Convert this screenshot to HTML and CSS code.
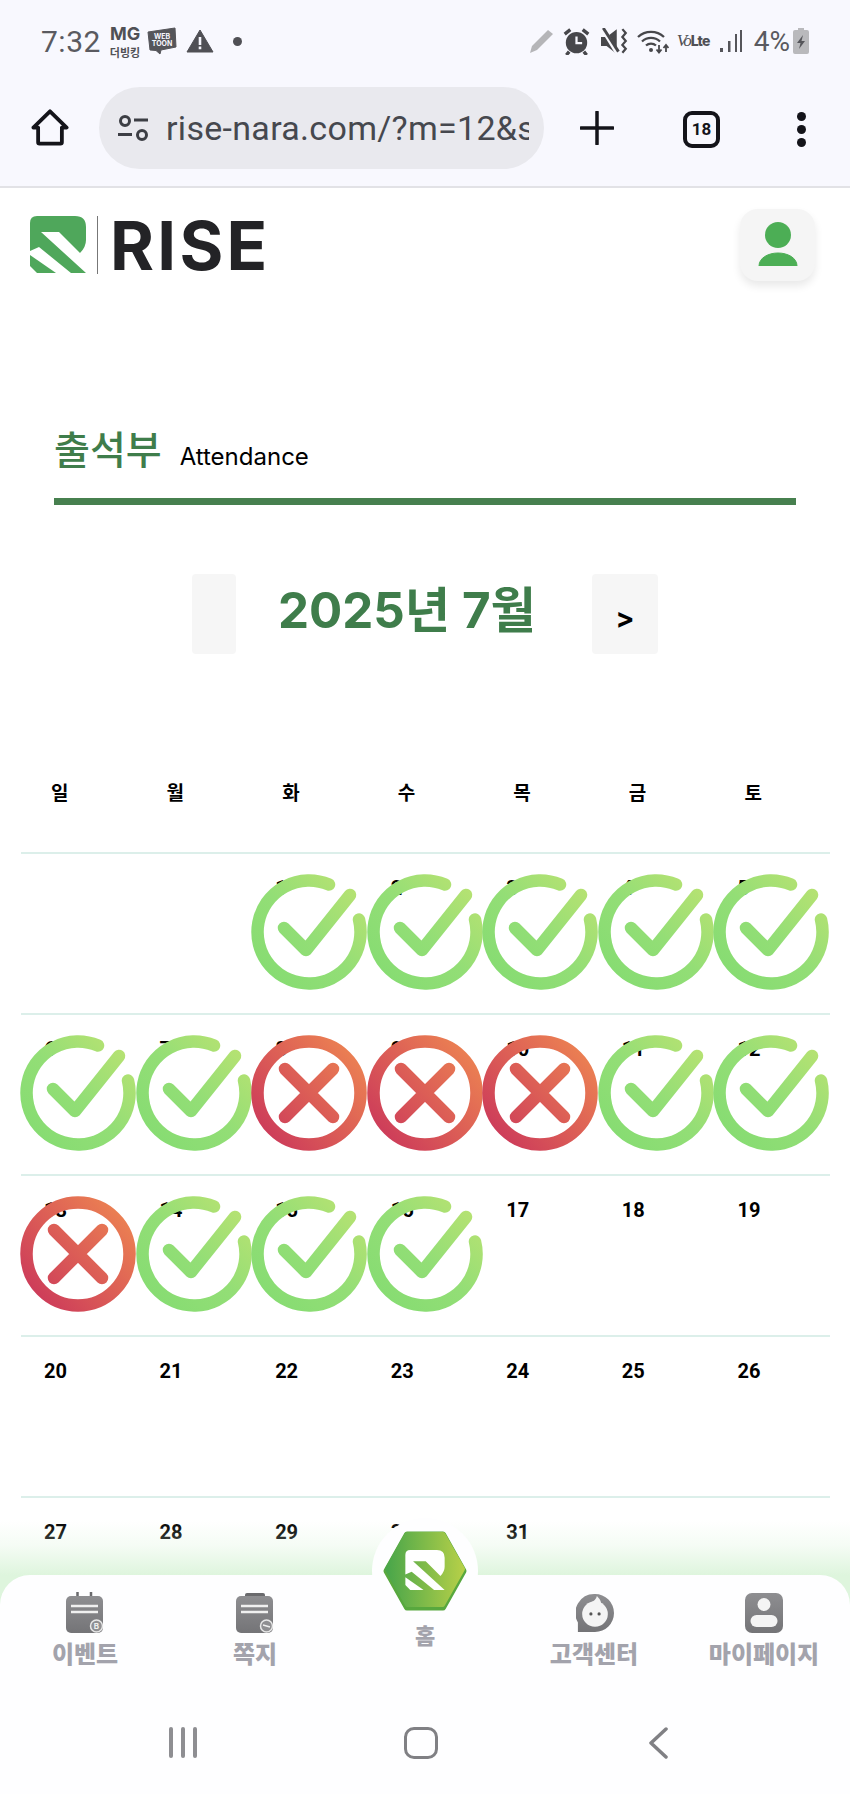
FILE: index.html
```html
<!DOCTYPE html>
<html lang="ko">
<head>
<meta charset="utf-8">
<title>출석부</title>
<link rel="stylesheet" href="styles.css">
</head>
<body>
<svg class="defs" width="0" height="0" aria-hidden="true">
  <defs>
    <linearGradient id="gOk" gradientUnits="userSpaceOnUse" x1="-45" y1="45" x2="45" y2="-45">
      <stop offset="0" stop-color="#86dc72"/><stop offset="0.5" stop-color="#93de76"/><stop offset="1" stop-color="#b6e272"/>
    </linearGradient>
    <linearGradient id="gNo" gradientUnits="userSpaceOnUse" x1="-45" y1="45" x2="50" y2="-40">
      <stop offset="0" stop-color="#cc3a5a"/><stop offset="1" stop-color="#ec8252"/>
    </linearGradient>
    <linearGradient id="gHex" x1="0" y1="0" x2="1" y2="0">
      <stop offset="0" stop-color="#4aa64a"/><stop offset="1" stop-color="#b4cf48"/>
    </linearGradient>
    <linearGradient id="gNav" x1="0" y1="0" x2="0" y2="1">
      <stop offset="0" stop-color="#8e8e91"/><stop offset="1" stop-color="#747477"/>
    </linearGradient>
    <symbol id="ok" viewBox="-58 -58 116 116">
      <g fill="none" stroke="url(#gOk)" stroke-width="12.500" stroke-linecap="round" stroke-linejoin="round">
        <path d="M20 -47.500A51.500 51.500 0 1 0 50 -12.500"/>
        <path d="M-25 -4L-3 18L41 -37"/>
      </g>
    </symbol>
    <symbol id="no" viewBox="-58 -58 116 116">
      <g fill="none" stroke="url(#gNo)" stroke-width="12.500" stroke-linecap="round">
        <circle r="51.500"/>
        <path d="M-24 -24L24 24M24 -24L-24 24"/>
      </g>
    </symbol>
    <symbol id="rmark" viewBox="0 0 56 57">
      <path d="M7 0H45Q56 0 56 11V24Q56 31 50 37L29 16H11L56 57H41L9 31L0 35V7Q0 0 7 0Z"/>
      <path d="M0 39V50L7 57H26Z"/>
    </symbol>
  </defs>
</svg>

<header class="statusbar">
  <div class="status-left">
    <span class="clock">7:32</span>
    <span class="mg"><b>MG</b><i>더빙킹</i></span>
    <svg class="ic-webtoon" viewBox="0 0 30 28"><path d="M1 5L28 1L29 20L14 23L13 27L9 23.500L3 23Z" fill="#55555a" stroke="#55555a" stroke-linejoin="round"/><text x="15" y="12" class="wt">WEB</text><text x="15" y="19" class="wt">TOON</text></svg>
    <svg class="ic-warn" viewBox="0 0 28 24"><path d="M14 1L27 23H1Z" fill="#505055" stroke="#505055" stroke-linejoin="round"/><path d="M12.700 8h2.600v8h-2.600zM12.700 17.600h2.600v2.600h-2.600z" fill="#f8f8fe"/></svg>
    <span class="dot"></span>
  </div>
  <div class="status-right">
    <svg class="ic-pen" viewBox="0 0 26 26"><path d="M1 25L3 18L19 2L24 6L8 22Z" fill="#b5b5b8"/></svg>
    <svg class="ic-alarm" viewBox="0 0 24 24"><circle cx="12" cy="13" r="9.500" fill="#47474b"/><path d="M1.500 5.500L6.500 1.500M22.500 5.500L17.500 1.500M5.500 21L3 24M18.500 21L21 24" stroke="#47474b" stroke-width="3"/><path d="M12 7.500v6h5" fill="none" stroke="#f8f8fe" stroke-width="2"/></svg>
    <svg class="ic-mute" viewBox="0 0 24 24"><path d="M0 8h5L14 1V23L5 16H0Z" fill="#47474b"/><path d="M1 0L15 23" stroke="#f8f8fe" stroke-width="4"/><path d="M2 0L15.500 21" stroke="#47474b" stroke-width="2.600"/><path d="M19 1l3 3.500-3 3.500 3 3.500-3 3.500 3 3.500-3 3.500" fill="none" stroke="#47474b" stroke-width="2"/></svg>
    <svg class="ic-wifi" viewBox="0 0 32 26"><path d="M1 9A19 19 0 0 1 27 9M5 13.500A13 13 0 0 1 23 13.500M9 17.500A7.500 7.500 0 0 1 19 17.500" fill="none" stroke="#47474b" stroke-width="2.300"/><circle cx="14" cy="22" r="2" fill="#47474b"/><path d="M22 17v7M19.500 21.500l2.500 3 2.500-3M29 24v-7M26.500 20l2.500-3 2.500 3" fill="none" stroke="#47474b" stroke-width="1.800"/></svg>
    <span class="volte"><i>Vo</i><b>Lte</b></span>
    <svg class="ic-signal" viewBox="0 0 24 24"><path d="M2 19h3v4H2zM10 12h2.500v11H10zM17 5h2v18h-2z M22 1h2v22h-2z" fill="#55555a"/></svg>
    <span class="pct">4%</span>
    <svg class="ic-batt" viewBox="0 0 16 26"><path d="M5 0h6v2h3a2 2 0 0 1 2 2v20a2 2 0 0 1-2 2H2a2 2 0 0 1-2-2V4a2 2 0 0 1 2-2h3Z" fill="#b9b9bc"/><path d="M10 7L4 15h3.500L6 21l6-8H8.500Z" fill="#55555a"/></svg>
  </div>
</header>

<nav class="browserbar">
  <svg class="ic-home" viewBox="0 0 40 40"><path d="M2.500 19.500L20 2.500L37.500 19.500H32.500V35a1.500 1.500 0 0 1-1.500 1.500H9A1.500 1.500 0 0 1 7.500 35V19.500Z" fill="none" stroke="#14141a" stroke-width="4" stroke-linejoin="round"/></svg>
  <div class="urlpill">
    <svg class="ic-tune" viewBox="0 0 32 26"><g fill="none" stroke="#3c3e44" stroke-width="3"><circle cx="8" cy="6" r="4.500"/><path d="M17 5H31M1 19.500H15"/><circle cx="25" cy="20" r="4.500"/></g></svg>
    <span class="urltext">rise-nara.com/?m=12&amp;s</span>
  </div>
  <svg class="ic-plus" viewBox="0 0 34 34"><path d="M17 1V33M1 17H33" stroke="#14141a" stroke-width="3.500" stroke-linecap="round"/></svg>
  <span class="tabs">18</span>
  <span class="menu"><i></i><i></i><i></i></span>
</nav>

<main class="page">
  <div class="topbar">
    <div class="logo">
      <svg class="logo-mark"><use href="#rmark"/></svg>
      <span class="logo-bar"></span>
      <span class="logo-text">RISE</span>
    </div>
    <button class="profile" type="button" aria-label="프로필">
      <svg viewBox="0 0 40 44"><circle cx="20" cy="13" r="13" fill="#4cae55"/><path d="M1 44C1 36 10 31 20 31S39 36 39 44Z" fill="#4cae55" stroke="#4cae55" stroke-linejoin="round"/></svg>
    </button>
  </div>

  <section class="heading">
    <h1>출석부</h1>
    <span>Attendance</span>
  </section>

  <div class="month">
    <button class="month-prev" type="button" aria-label="이전 달"></button>
    <h2>2025년 7월</h2>
    <button class="month-next" type="button">&gt;</button>
  </div>

  <div class="calendar">
    <div class="weekdays">
      <span>일</span><span>월</span><span>화</span><span>수</span><span>목</span><span>금</span><span>토</span>
    </div>
    <div class="week">
      <div class="day"></div>
      <div class="day"></div>
      <div class="day"><span>1</span><svg class="mark"><use href="#ok"/></svg></div>
      <div class="day"><span>2</span><svg class="mark"><use href="#ok"/></svg></div>
      <div class="day"><span>3</span><svg class="mark"><use href="#ok"/></svg></div>
      <div class="day"><span>4</span><svg class="mark"><use href="#ok"/></svg></div>
      <div class="day"><span>5</span><svg class="mark"><use href="#ok"/></svg></div>
    </div>
    <div class="week">
      <div class="day"><span>6</span><svg class="mark"><use href="#ok"/></svg></div>
      <div class="day"><span>7</span><svg class="mark"><use href="#ok"/></svg></div>
      <div class="day"><span>8</span><svg class="mark"><use href="#no"/></svg></div>
      <div class="day"><span>9</span><svg class="mark"><use href="#no"/></svg></div>
      <div class="day"><span>10</span><svg class="mark"><use href="#no"/></svg></div>
      <div class="day"><span>11</span><svg class="mark"><use href="#ok"/></svg></div>
      <div class="day"><span>12</span><svg class="mark"><use href="#ok"/></svg></div>
    </div>
    <div class="week">
      <div class="day"><span>13</span><svg class="mark"><use href="#no"/></svg></div>
      <div class="day"><span>14</span><svg class="mark"><use href="#ok"/></svg></div>
      <div class="day"><span>15</span><svg class="mark"><use href="#ok"/></svg></div>
      <div class="day"><span>16</span><svg class="mark"><use href="#ok"/></svg></div>
      <div class="day"><span>17</span></div>
      <div class="day"><span>18</span></div>
      <div class="day"><span>19</span></div>
    </div>
    <div class="week">
      <div class="day"><span>20</span></div>
      <div class="day"><span>21</span></div>
      <div class="day"><span>22</span></div>
      <div class="day"><span>23</span></div>
      <div class="day"><span>24</span></div>
      <div class="day"><span>25</span></div>
      <div class="day"><span>26</span></div>
    </div>
    <div class="week">
      <div class="day"><span>27</span></div>
      <div class="day"><span>28</span></div>
      <div class="day"><span>29</span></div>
      <div class="day"><span>30</span></div>
      <div class="day"><span>31</span></div>
      <div class="day"></div>
      <div class="day"></div>
    </div>
  </div>
</main>

<footer class="dock">
  <div class="glow"></div>
  <div class="tabbar">
    <a class="tab">
      <svg viewBox="0 0 38 42"><path d="M11.500 0v8M25 0v8" stroke="#6a6a6d" stroke-width="2.500"/><rect y="4" width="37" height="37" rx="5" fill="url(#gNav)"/><path d="M5 14H32M5 20H32" stroke="#f0f0f0" stroke-width="2.500"/><circle cx="30.500" cy="34" r="6" fill="#8f8f92" stroke="#e8e8e8" stroke-width="1.500"/><text x="30.500" y="37" class="badge">B</text></svg>
      <span>이벤트</span>
    </a>
    <a class="tab">
      <svg viewBox="0 0 38 42"><rect x="9" y="1" width="20" height="6" rx="2" fill="#6a6a6d"/><rect y="4" width="37" height="37" rx="5" fill="url(#gNav)"/><path d="M5 14H32M5 20H32" stroke="#f0f0f0" stroke-width="2.500"/><circle cx="30.500" cy="34" r="6" fill="#8f8f92" stroke="#e8e8e8" stroke-width="1.500"/><path d="M27 33L34 35" stroke="#f0f0f0" stroke-width="1.500"/></svg>
      <span>쪽지</span>
    </a>
    <a class="tab tab-home">
      <span class="hex-wrap">
        <svg viewBox="0 0 84 80">
          <path d="M24 3.500H60L80.500 40L60 76.500H24L3.500 40Z" fill="#58a83e" stroke="#58a83e" stroke-width="6" stroke-linejoin="round"/>
          <path d="M24 3.500H60L79.500 38L59.500 73.500H24.500L4.500 38Z" fill="url(#gHex)" stroke="url(#gHex)" stroke-width="5" stroke-linejoin="round"/>
          <svg class="hex-mark" x="22" y="19" width="40" height="40"><use href="#rmark"/></svg>
        </svg>
      </span>
      <span>홈</span>
    </a>
    <a class="tab tab-help">
      <svg viewBox="0 0 40 40"><path d="M20 0A20 20 0 1 1 20 40H2V30A20 20 0 0 1 20 0Z" fill="url(#gNav)"/><circle cx="20" cy="21" r="13.500" fill="#f4f4f4"/><path d="M15 9Q21 7 22 2Q28 8 26 12Z" fill="#f4f4f4"/><circle cx="15.700" cy="21" r="1.700" fill="#555"/><circle cx="24.300" cy="21" r="1.700" fill="#555"/></svg>
      <span>고객센터</span>
    </a>
    <a class="tab">
      <svg viewBox="0 0 38 40"><rect width="38" height="40" rx="7" fill="url(#gNav)"/><circle cx="19" cy="11.500" r="6.500" fill="#f4f4f4"/><rect x="5.500" y="22" width="27" height="12" rx="6" fill="#f4f4f4"/></svg>
      <span>마이페이지</span>
    </a>
  </div>
  <div class="sysnav">
    <span class="recents"><i></i><i></i><i></i></span>
    <span class="sys-home"></span>
    <svg class="sys-back" viewBox="0 0 20 32"><path d="M18 2L3 16L18 30" fill="none" stroke="#808084" stroke-width="3.500" stroke-linecap="round" stroke-linejoin="round"/></svg>
  </div>
</footer>
</body>
</html>
```

FILE: styles.css
```css
* { box-sizing: border-box; }
html, body { margin: 0; padding: 0; }
body {
  width: 850px;
  height: 1794px;
  overflow: hidden;
  position: relative;
  background: #fff;
  font-family: Inter, "Noto Sans CJK KR", sans-serif;
}
.defs { position: absolute; }

/* status bar */
.statusbar {
  height: 80px;
  background: #f8f8fe;
  display: flex;
  justify-content: space-between;
  align-items: center;
  padding: 2px 41px 0 41px;
}
.status-left, .status-right { display: flex; align-items: center; }
.clock { font: 400 30px Roboto, sans-serif; color: #5a5a60; letter-spacing: .5px; }
.mg { display: flex; flex-direction: column; align-items: center; margin-left: 9px; color: #505055; }
.mg b { font: 700 18px/21px Inter, sans-serif; }
.mg i { font: 700 11px/16px "Noto Sans CJK KR", sans-serif; }
.ic-webtoon { width: 30px; height: 28px; margin-left: 7px; }
.wt { font: 700 7px Inter, sans-serif; fill: #f8f8fe; text-anchor: middle; }
.ic-warn { width: 28px; height: 24px; margin-left: 9px; }
.dot { width: 9px; height: 9px; border-radius: 50%; background: #505055; margin-left: 19px; }
.ic-pen { width: 26px; height: 26px; margin-right: 8px; }
.ic-alarm { width: 27px; height: 27px; margin-right: 11px; }
.ic-mute { width: 27px; height: 27px; margin-right: 9px; }
.ic-wifi { width: 32px; height: 26px; margin-right: 8px; }
.volte { display: flex; align-items: baseline; color: #505055; width: 35px; white-space: nowrap; }
.volte i { font: italic 400 17px "Liberation Serif", serif; letter-spacing: -2px; }
.volte b { font: 800 14px Inter, sans-serif; letter-spacing: -.8px; margin-left: 1px; }
.ic-signal { width: 24px; height: 24px; margin-left: 6px; }
.pct { font: 400 28px Roboto, sans-serif; color: #5a5a60; margin-left: 12px; }
.ic-batt { width: 16px; height: 26px; margin-left: 3px; }

/* browser toolbar */
.browserbar {
  height: 108px;
  background: #f8f8fe;
  border-bottom: 2px solid #e2e2e6;
  display: flex;
  align-items: flex-start;
  padding: 7px 0 0 0;
}
.ic-home { width: 38px; height: 38px; margin: 22px 0 0 31px; flex: none; }
.urlpill {
  width: 445px;
  height: 82px;
  margin-left: 30px;
  border-radius: 41px;
  background: #e9e9ee;
  display: flex;
  align-items: center;
  padding: 0 15px 0 18px;
  flex: none;
  overflow: hidden;
}
.ic-tune { width: 32px; height: 26px; flex: none; }
.urltext { margin-left: 17px; font: 400 34px Roboto, sans-serif; color: #46484e; white-space: nowrap; overflow: hidden; letter-spacing: .3px; }
.ic-plus { width: 34px; height: 34px; margin: 24px 0 0 36px; flex: none; }
.tabs {
  width: 37px; height: 37px; margin: 24px 0 0 69px; flex: none;
  border: 4px solid #14141a; border-radius: 9px;
  font: 700 17px/29px Roboto, sans-serif; color: #14141a; text-align: center;
}
.menu { display: flex; flex-direction: column; gap: 4px; margin: 25px 0 0 77px; }
.menu i { width: 9px; height: 9px; border-radius: 50%; background: #14141a; display: block; }

/* page */
.topbar { display: flex; justify-content: space-between; padding: 21px 35px 0 30px; height: 100px; }
.logo { display: flex; align-items: flex-start; height: 58px; margin-top: 7px; }
.logo-mark { width: 56px; height: 57px; fill: #4fa75b; }
.logo-bar { width: 1px; height: 58px; background: #777; margin-left: 11px; }
.logo-text { font: 700 67px/58px Inter, sans-serif; color: #232326; margin: 1px 0 0 12px; letter-spacing: 3.300px; }
.profile {
  width: 75px; height: 72px; border: 0; padding: 13px 0 0; border-radius: 18px;
  background: #f5f5f5; box-shadow: 0 5px 8px rgba(0,0,0,.09);
  display: flex; justify-content: center; align-items: flex-start;
}
.profile svg { width: 40px; height: 44px; }
.heading {
  margin: 139px 54px 0 54px;
  height: 78px;
  border-bottom: 7px solid #47804f;
  display: flex;
  align-items: flex-start;
  color: #000;
}
.heading h1 { margin: -4px 0 0; font: 500 39px/48px "Noto Sans CJK KR", sans-serif; color: #3f7d4b; }
.heading span { margin: 15px 0 0 18px; font: 400 24px/30px Inter, sans-serif; }
.month { display: flex; align-items: flex-start; margin: 69px 0 0 192px; height: 80px; }
.month button { height: 80px; border: 0; border-radius: 4px; background: #f6f6f6; padding: 0; }
.month-prev { width: 44px; }
.month-next { width: 66px; font: 700 28px/1 Inter, sans-serif; color: #000; padding-top: 8px !important; }
.month h2 { width: 356px; margin: 0; padding-left: 42px; font: 700 49.300px/72px Inter, "Noto Sans CJK KR", sans-serif; color: #3f7d4b; white-space: nowrap; }

.calendar { margin: 0 20px 0 21px; }
.weekdays { display: grid; grid-template-columns: repeat(7, 1fr); height: 198px; padding-top: 116px; }
.weekdays span { font: 700 19px/44px "Noto Sans CJK KR", sans-serif; color: #000; padding-left: 30px; }
.week { display: grid; grid-template-columns: repeat(7, 1fr); height: 161px; border-top: 2px solid #dcefea; }
.day { position: relative; padding: 22px 0 0 23px; font: 700 20px/24px Roboto, sans-serif; color: #000; }
.mark { position: absolute; left: -1px; top: 20px; width: 116px; height: 116px; }

/* bottom dock */
.dock { position: absolute; left: 0; right: 0; top: 1520px; height: 274px; }
.glow {
  height: 85px;
  background: linear-gradient(rgba(222,245,221,0) 0, rgba(222,245,221,.3) 30%, #def5dd 65%);
}
.tabbar {
  height: 139px;
  margin-top: -30px;
  background: #fefeff;
  border-radius: 30px 30px 0 0;
  display: grid;
  grid-template-columns: 170px 170px 170px 168px 172px;
  position: relative;
}
.tab { display: flex; flex-direction: column; align-items: center; padding-top: 17px; color: #a3a3ac; position: relative; }
.tab svg { width: 38px; height: 42px; }
.tab > span { font: 900 24px/32px "Noto Sans CJK KR", sans-serif; margin-top: 3px; }
.tab-help svg { margin-left: 2px; }
.tab-home { padding-top: 43px; }
.tab-home > span:last-child { font-size: 22px; margin-top: 0; }
.badge { font: 700 8px Inter, sans-serif; fill: #eee; text-anchor: middle; }
.hex-wrap {
  position: absolute; top: -60px; left: 32px;
  width: 106px; height: 106px; border-radius: 50%; background: #fefeff;
  display: flex; align-items: center; justify-content: center;
}
.hex-wrap svg { width: 84px; height: 80px; }
.hex-wrap .hex-mark { fill: #fff; width: 40px; height: 40px; }
.sysnav { height: 80px; background: #fefeff; display: flex; align-items: flex-start; padding: 13px 0 0 169px; }
.recents { display: flex; gap: 8px; }
.recents i { width: 4px; height: 31px; background: #8e8e92; border-radius: 2px; display: block; }
.sys-home { margin-left: 207px; width: 34px; height: 32px; border: 3.500px solid #808084; border-radius: 10px; }
.sys-back { margin-left: 210px; width: 20px; height: 32px; }
```
